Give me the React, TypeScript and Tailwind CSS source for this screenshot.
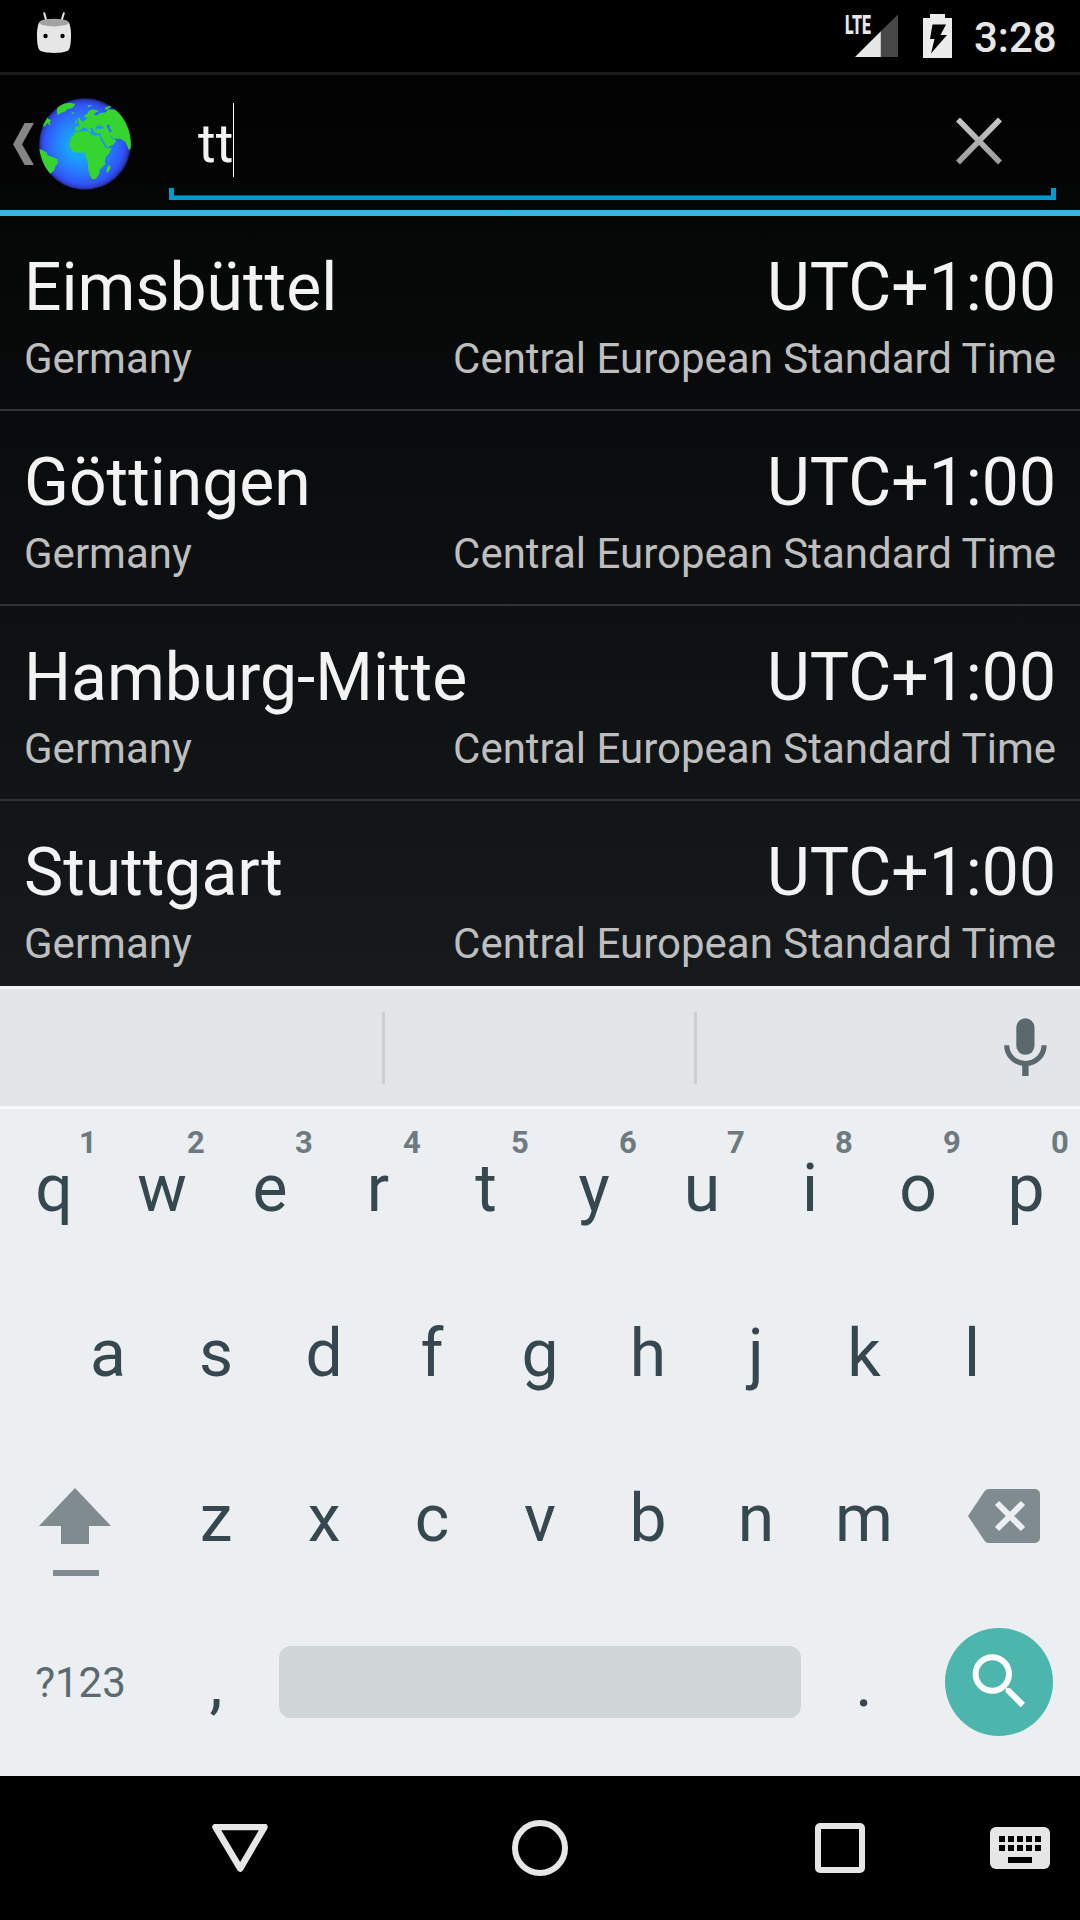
import React from "react";

const cities = ["Eimsbüttel", "Göttingen", "Hamburg-Mitte", "Stuttgart"];
const topRow = ["q", "w", "e", "r", "t", "y", "u", "i", "o", "p"];
const homeRow = ["a", "s", "d", "f", "g", "h", "j", "k", "l"];
const bottomRow = ["z", "x", "c", "v", "b", "n", "m"];

function StatusBar() {
  return (
    <div className="flex h-[75px] shrink-0 items-start border-b-[3px] border-[#1b1b1b] bg-black">
      <svg className="ml-[36px] mt-[12px] h-[42px] w-[36px]" viewBox="0 0 36 42">
        <path d="M8.2 1.2 10.5 9M27.8 1.2 25.5 9" stroke="#e4e4e4" strokeWidth="2" strokeLinecap="round" />
        <path d="M3 10.5C1.2 15 .8 20 1 25c.1 5 .5 9.500 2 12.500C5 42 31 42 33 37.500c1.500-3 1.900-7.500 2-12.500.2-5-.2-10-2-14.500z" fill="#e6e6e6" />
        <ellipse cx="18" cy="10.600" rx="14.700" ry="3.900" fill="#a3a3a3" />
        <circle cx="9.500" cy="24" r="2.200" fill="#000" />
        <circle cx="26.500" cy="24" r="2.200" fill="#000" />
      </svg>
      <div className="relative ml-auto mt-[14px] h-[44px] w-[54px]">
        <svg className="absolute left-0 top-0 h-[44px] w-[54px]" viewBox="0 0 54 44">
          <path d="M36.500 17.500 54 .5V43H36.500z" fill="#484848" />
          <path d="M11 43 36.800 17.200V43z" fill="#e6e6e6" />
        </svg>
        <span className="absolute left-px top-[-2px] origin-left scale-x-[0.61] text-[26px] font-black leading-[26px] text-[#e6e6e6]">
          LTE
        </span>
      </div>
      <svg className="ml-[25px] mt-[14px] h-[44px] w-[29px]" viewBox="0 0 29 44">
        <path d="M7 0h15v4h7v40H0V4h7z" fill="#ececec" />
        <path d="M9.500 10.500H23L17.500 21H24L8 39.500 11.500 25H7z" fill="#000" />
      </svg>
      <span className="ml-[22px] mr-[26px] mt-[14px] w-[80px] whitespace-nowrap text-right text-[42px] font-medium leading-[48px] text-[#e6e6e6]">
        3:28
      </span>
    </div>
  );
}

function Globe() {
  return (
    <svg className="ml-[5px] mt-[23px] h-[92px] w-[92px]" viewBox="117 293 277 277">
      <defs>
        <radialGradient id="sea" cx="255" cy="432" r="138" fx="235" fy="438" gradientUnits="userSpaceOnUse">
          <stop offset="0" stopColor="#0cb8ff" />
          <stop offset="0.3" stopColor="#18a0ff" />
          <stop offset="0.62" stopColor="#2878ff" />
          <stop offset="0.86" stopColor="#3055fa" />
          <stop offset="0.95" stopColor="#2c3fc8" />
          <stop offset="1" stopColor="#1a1f70" />
        </radialGradient>
        <clipPath id="disc">
          <circle cx="255.500" cy="431.500" r="138" />
        </clipPath>
      </defs>
      <circle cx="255.500" cy="431.500" r="138" fill="url(#sea)" />
      <g fill="#35d42f" clipPath="url(#disc)">
        {/* Greenland, Iceland and the arctic islands */}
        <path d="M171 326L175 318 191 310 211 307 226 311 221 320 211 325 203 326 196 334 183 338 174 345 171 337z" />
        <path d="M213 338l8-2 4 2-6 3zM261 317l8-3 8 1-5 3-6 3-3-3zM314 325l6-6 10-3 5 2-8 6-7 5z" />
        {/* The Americas */}
        <path d="M115 360l26-14 4 10 8 3-2 7-5 1 6 3-2 4-10-5-3 8-22 4z" />
        <path d="M113 444l17 7 11 7 2 8 14 4 17 8-1 12-7 9-3 12-12 10-43-30z" />
        {/* British Isles and Scandinavia */}
        <path d="M234 355l3-4 4 6 5 7-2 5-9 2 2-7-4-5zM227 362l5-1-1 7-6 1z" />
        <path d="M252 347l11-7 3-8 11-4 13 1 8 5-9 1-7 7 3 5-7 5-7-1-5 3-7-1z" />
        {/* Eurasia and Arabia */}
        <path d="M226 391L226 379 238 378 240 366 252 362 262 355 272 352 282 346 293 345 300 338 318 336 325 328 345 328 372 345 400 400 398 440 388 450 382 436 376 424 362 416 345 416 336 412 328 404 334 413 346 418 349 425 340 434 322 441 312 424 302 406 304 401 294 400 284 396 280 390 280 385 270 383 275 392 270 396 258 382 250 382 240 390 232 393z" />
        {/* Africa and Madagascar */}
        <path d="M226 397L245 394 266 392 270 400 284 406 298 405 304 420 317 443 335 445 328 460 317 472 315 484 317 492 300 508 299 521 288 536 277 538 271 527 264 505 265 490 258 470 254 457 232 457 222 456 210 443 208 430 212 415z" />
        <path d="M330 494l3 8-7 14-4 3-2-8 3-10z" />
      </g>
      <path d="M288 382l5-8 7 2 8 2 4 6-8 2-9-1-6 3z" fill="#2390ff" />
      <path d="M322 372l9 3-2 8 6 5v9l-7-2-3-9-5-7z" fill="#2b78ff" />
    </svg>
  );
}

function SearchBar() {
  return (
    <div className="flex h-[141px] shrink-0 items-start border-b-[6px] border-[#33b5e5]">
      <svg className="ml-[13px] mt-[48px] h-[42px] w-[21px]" viewBox="24 98 63 127">
        <path d="M59 98h28L51 162l36 63H59L24 162z" fill="#858585" />
      </svg>
      <Globe />
      <div className="relative ml-[38px] h-[125px] w-[887px]">
        <div className="flex h-full items-start justify-between pl-[29px] pr-[52px]">
          <div className="flex items-start">
            <span className="mt-[37px] text-[54px] leading-[63px] text-[#f3f3f3]">tt</span>
            <span className="mt-[28px] h-[74px] w-px bg-white" />
          </div>
          <svg className="mt-[41px] h-[50px] w-[50px]" viewBox="0 0 50 50">
            <defs>
              <linearGradient id="fade" x1="0" y1="0" x2="0" y2="50" gradientUnits="userSpaceOnUse">
                <stop offset="0" stopColor="#cacaca" />
                <stop offset="1" stopColor="#999999" />
              </linearGradient>
            </defs>
            <path d="M4 3.500 46 46.500M46 3.500 4 46.500" stroke="url(#fade)" strokeWidth="5.500" />
          </svg>
        </div>
        <div className="absolute bottom-0 left-0 h-[12px] w-full border-x-[5px] border-b-4 border-[#0099cc]">
          <div className="absolute bottom-0 left-0 h-px w-full bg-[#005a78]" />
        </div>
      </div>
    </div>
  );
}

function CityRow({ name }: { name: string }) {
  return (
    <div className="h-[195px] shrink-0 border-b-2 border-[#303234] px-[24px] pt-[33px]">
      <div className="flex justify-between text-[66px] leading-[78px] text-[#f3f3f3]">
        <span>{name}</span>
        <span>UTC+1:00</span>
      </div>
      <div className="mt-[7px] flex justify-between text-[42px] leading-[50px] text-[#bebebe]">
        <span>Germany</span>
        <span>Central European Standard Time</span>
      </div>
    </div>
  );
}

function Key({ label, hint }: { label: string; hint?: string }) {
  return (
    <div className="relative h-[165px] w-[108px] text-center text-[66px] leading-[159px] text-[#37474f]">
      {label}
      {hint && (
        <span className="absolute left-[68px] top-[12px] w-[40px] text-center text-[31px] font-bold leading-[44px] text-[#6e7a80]">
          {hint}
        </span>
      )}
    </div>
  );
}

function Keyboard() {
  return (
    <div className="h-[790px] shrink-0 bg-[#ebeff2]">
      <div className="flex h-[123px] items-start border-y-[3px] border-t-[#f0f2f3] border-b-[#f5f7f9] bg-[#e2e6e9]">
        <div className="ml-[382px] mt-[23px] h-[72px] w-[3px] bg-[#cbcfd2]" />
        <div className="ml-[309px] mt-[23px] h-[72px] w-[3px] bg-[#cbcfd2]" />
        <svg className="ml-[307px] mt-[29px] h-[59px] w-[43px]" viewBox="0 0 43 59">
          <rect x="12.300" y=".3" width="18.200" height="36.500" rx="9.100" fill="#5b686e" />
          <path d="M2.700 27.300a18.700 18.200 0 0 0 37.400 0" fill="none" stroke="#5b686e" strokeWidth="5.200" />
          <path d="M18.200 46h6.400v12h-6.400z" fill="#5b686e" />
        </svg>
      </div>
      <div className="flex">
        {topRow.map((k, i) => (
          <Key key={k} label={k} hint={String((i + 1) % 10)} />
        ))}
      </div>
      <div className="flex justify-center">
        {homeRow.map((k) => (
          <Key key={k} label={k} />
        ))}
      </div>
      <div className="flex">
        <div className="w-[162px]">
          <svg className="ml-[39px] mt-[49px] h-[88px] w-[72px]" viewBox="0 0 72 88">
            <path d="M36 0 72 38H50V56H22V38H0z" fill="#808b8f" />
            <path d="M14 82h46v6H14z" fill="#808a90" />
          </svg>
        </div>
        {bottomRow.map((k) => (
          <Key key={k} label={k} />
        ))}
        <svg className="ml-[50px] mt-[50px] h-[54px] w-[72px]" viewBox="0 0 72 54">
          <path d="M20.500 0H67a5 5 0 0 1 5 5V49a5 5 0 0 1-5 5H20.500a5 5 0 0 1-4-2.300L0 27 16.500 2.300A5 5 0 0 1 20.500 0z" fill="#808b8f" />
          <path d="M29 14 55 40M55 14 29 40" stroke="#ebeff2" strokeWidth="6" />
        </svg>
      </div>
      <div className="flex items-start">
        <div className="w-[162px] pr-px text-center text-[42px] leading-[157px] text-[#5b6a71]">?123</div>
        <Key label="," />
        <div className="ml-[9px] mt-[42px] h-[72px] w-[522px] rounded-[12px] bg-[#d0d5d8]" />
        <div className="ml-[9px]">
          <Key label="." />
        </div>
        <div className="ml-[27px] mt-[24px] h-[108px] w-[108px] rounded-full bg-[#4db6ac]">
          <svg className="h-full w-full" viewBox="0 0 108 108">
            <circle cx="47.300" cy="46" r="16.700" fill="none" stroke="#fff" strokeWidth="6" />
            <path d="M61 60h4L80 74.800 75.700 79.300 60.500 64z" fill="#fff" />
          </svg>
        </div>
      </div>
    </div>
  );
}

function NavigationBar() {
  const dots = [9, 18, 27, 36, 45];
  return (
    <div className="flex h-[144px] shrink-0 items-center bg-black">
      <svg className="ml-[212px] h-[48px] w-[56px]" viewBox="0 0 56 48">
        <path d="M3.500 3H52.500L28.200 44.500z" fill="none" stroke="#e6e6e6" strokeWidth="6.500" strokeLinejoin="round" />
      </svg>
      <div className="ml-[244px] h-[56px] w-[56px] rounded-full border-[6px] border-[#e6e6e6]" />
      <div className="ml-[247px] h-[50px] w-[50px] rounded-[5px] border-[6px] border-[#e6e6e6]" />
      <svg className="ml-[125px] h-[42px] w-[60px]" viewBox="0 0 60 42">
        <rect width="60" height="42" rx="6" fill="#e6e6e6" />
        {dots.map((x) => (
          <path key={x} d={`M${x} 9h6v6h-6zM${x} 18h6v6h-6z`} fill="#000" />
        ))}
        <path d="M18 30h24v6H18z" fill="#000" />
      </svg>
    </div>
  );
}

export default function App() {
  return (
    <div className="flex h-[1920px] w-[1080px] flex-col overflow-hidden bg-black font-['Roboto',sans-serif]">
      <div className="flex h-[986px] shrink-0 flex-col overflow-hidden bg-linear-to-b/srgb from-black to-[#161a1c]">
        <StatusBar />
        <SearchBar />
        {cities.map((name) => (
          <CityRow key={name} name={name} />
        ))}
      </div>
      <Keyboard />
      <NavigationBar />
    </div>
  );
}
